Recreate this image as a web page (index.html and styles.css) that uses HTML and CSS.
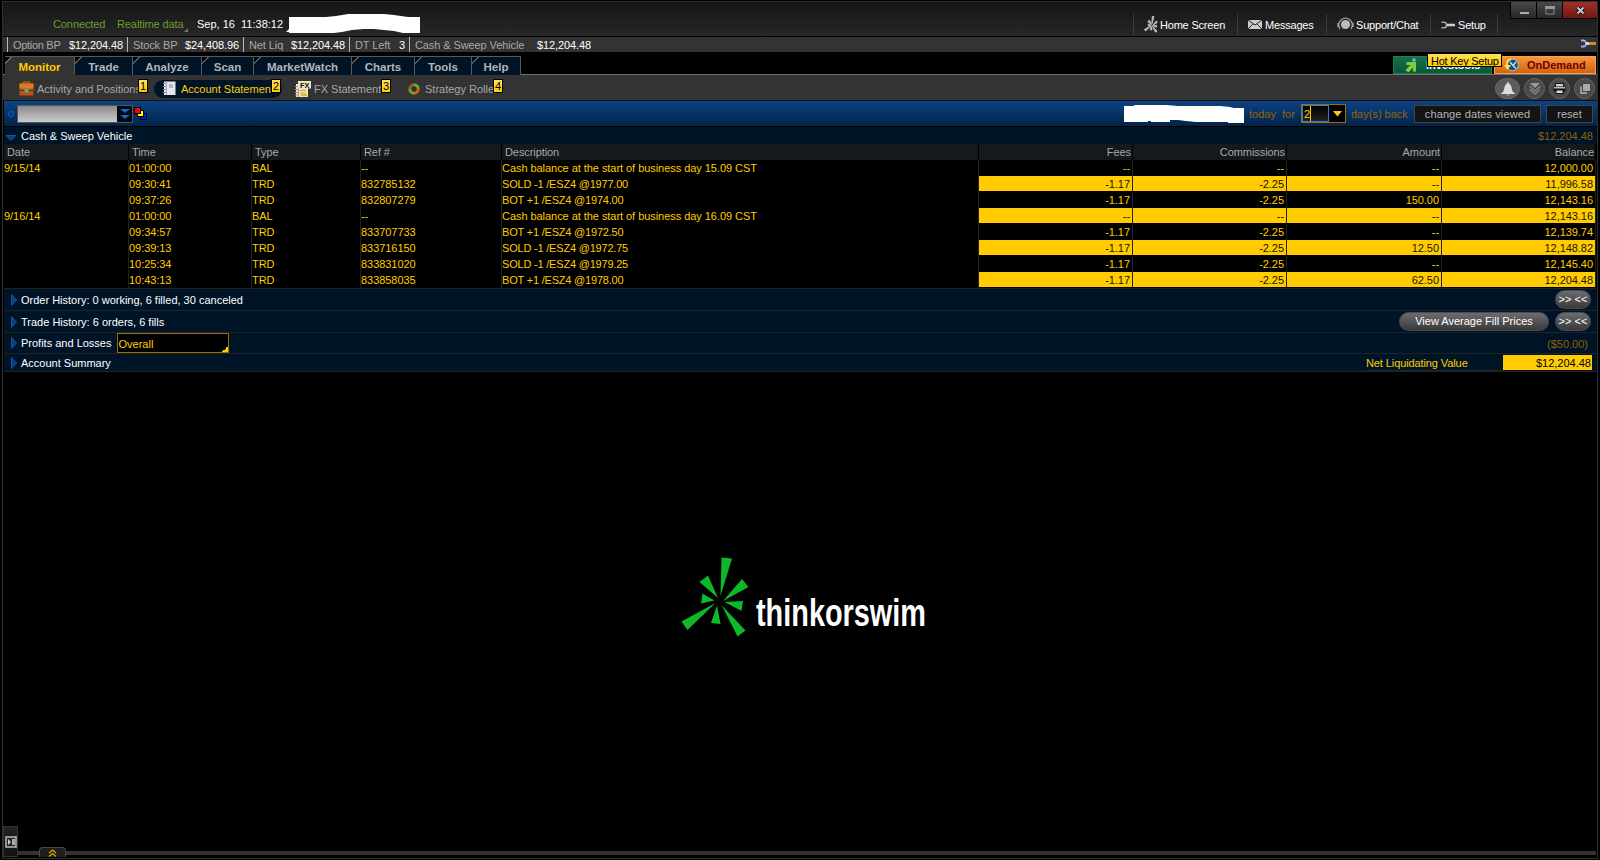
FILE: index.html
```html
<!DOCTYPE html>
<html lang="en">
<head>
    <meta charset="UTF-8">
    <title>thinkorswim</title>
    <link rel="stylesheet" href="styles.css">
</head>
<body>
<div id="window">
    <div id="title">
        <span class="green connected">Connected</span>
        <span class="green realtime">Realtime data</span>
        <svg class="corner" width="4" height="4"><path d="M4 0V4H0Z" fill="#777"/></svg>
        <span class="clock">Sep, 16&nbsp; 11:38:12</span>
        <svg class="mask" width="134" height="20"><path d="M0 18L4 14V18ZM3 3H40L50 2L62 0H98L108 1L122 3H134V19H117L108 17L98 16L88 15H78L66 16L56 18L48 19H3Z" fill="#fff"/></svg>
        <ul id="links">
            <li class="home">
                <svg width="14" height="17" viewBox="0 4 70 84"><path stroke="#bbb" stroke-width="5" fill="#bbb" d="M41 6L50 7L40 42ZM62 28L67 35L43 50ZM19 31L27 25L38 47ZM22 43L34 50L21 52ZM35 52L2 71L8 78ZM37 55L31 72L40 73ZM42 54L65 79L58 85ZM45 51L63 50L61 60Z"/></svg>
                Home Screen
            </li>
            <li class="messages">
                <svg width="14" height="9" viewBox="0 0 14 9"><path d="M0 0H14V9H0Z" fill="#ccc"/><path d="M0 0L7 5L14 0M0 9L5 4M14 9L9 4" stroke="#222" fill="none"/></svg>
                Messages
            </li>
            <li class="support">
                <svg width="17" height="16" viewBox="0 0 17 16"><circle cx="8.500" cy="7.500" r="4.600" fill="#bbb"/><path d="M3 12A6.800 6.800 0 1 1 14 12" fill="none" stroke="#999" stroke-width="1.300"/><path d="M1.200 6V10M15.800 6V10" stroke="#aaa" stroke-width="1.500"/></svg>
                Support/Chat
            </li>
            <li class="setup">
                <svg width="14" height="8" viewBox="0 0 14 8"><path d="M.5 1.200H3.500Q5.500 1.500 5.500 4Q5.500 6.500 3.500 6.800H.5" fill="none" stroke="#aaa" stroke-width="1.600"/><path d="M6 4H14" stroke="#ccc" stroke-width="2.600"/></svg>
                Setup
            </li>
        </ul>
        <div id="controls">
            <div><svg width="10" height="10"><path d="M1 7H10V9H1Z" fill="#aaa"/></svg></div>
            <div><svg width="10" height="10"><path d="M1 2H9V9H1Z" fill="none" stroke="#888"/><path d="M0 1H10V4H0Z" fill="#999"/></svg></div>
            <div class="close"><svg width="9" height="9"><path d="M1.500 1.500L7.500 7.500M7.500 1.500L1.500 7.500" stroke="#000" stroke-width="3.500"/><path d="M1.500 1.500L7.500 7.500M7.500 1.500L1.500 7.500" stroke="#ccc" stroke-width="2"/></svg></div>
        </div>
    </div>

    <div id="status">
        <div class="w1"><label>Option BP</label><b>$12,204.48</b></div>
        <div class="w2"><label>Stock BP</label><b>$24,408.96</b></div>
        <div class="w3"><label>Net Liq</label><b>$12,204.48</b></div>
        <div class="w4"><label>DT Left</label><b>3</b></div>
        <div class="w5"><label>Cash &amp; Sweep Vehicle</label><b>$12,204.48</b></div>
        <svg class="wrench" width="16" height="9" viewBox="0 0 16 9"><path d="M1 1.500H4Q6 2 6 4.500Q6 7 4 7.500H1" fill="none" stroke="#9ab4ee" stroke-width="1.800"/><path d="M6 4.500H9" stroke="#eee" stroke-width="2.500"/><path d="M9 4.500H16" stroke="#d98a28" stroke-width="3"/></svg>
    </div>

    <div id="tabs">
        <div class="tab on t1">Monitor</div>
        <div class="tab t2">Trade</div>
        <div class="tab t3">Analyze</div>
        <div class="tab t4">Scan</div>
        <div class="tab t5">MarketWatch</div>
        <div class="tab t6">Charts</div>
        <div class="tab t7">Tools</div>
        <div class="tab t8">Help</div>
        <div class="investools">
            <svg width="12" height="15" viewBox="0 0 12 15"><path d="M1.500 4H11V13.500H8V9.500L3.500 14.500L.5 12L5.500 7H1.500Z" fill="#7ed03c"/><circle cx="9" cy="2" r="1.800" fill="#6db6ee"/></svg>
            <span>Investools</span>
        </div>
        <div class="ondemand">
            <svg width="15" height="14" viewBox="0 0 15 14"><circle cx="8.500" cy="7" r="5.800" fill="#1c5078" stroke="#9cc4dc"/><path d="M6 4L9 7.500L12 4M9 7.500L12 10.500" stroke="#d6e8f2" fill="none" stroke-width="1.200"/><path d="M7 1.500C4 1.500 3 4 3 7" stroke="#ffe24a" stroke-width="2" fill="none"/><path d="M0 7H7L3.500 12Z" fill="#ffe24a"/></svg>
            <span>OnDemand</span>
        </div>
        <div class="tip">Hot Key Setup</div>
    </div>

    <div id="views">
        <div class="view v1">
            <svg width="15" height="15" viewBox="0 0 15 15"><path d="M4.500 3V1H10.500V3" fill="none" stroke="#b45a10" stroke-width="1.500"/><rect x=".5" y="2.500" width="14" height="12" rx="1" fill="#b85410"/><rect x=".5" y="2.500" width="14" height="5" rx="1" fill="#dc7c20"/><path d="M1 9.500H14" stroke="#6c2e06"/><rect x="5.500" y="8" width="4" height="3.500" fill="#48b3a4"/></svg>
            <span>Activity and Positions</span><i>1</i>
        </div>
        <div class="view v2 on">
            <svg width="13" height="15" viewBox="0 0 13 15"><rect x="1" y=".5" width="11.500" height="13.500" fill="#e6e6f0"/><path d="M3.500 1V14" stroke="#a9a9bb"/><path d="M0 2.500H3M0 5.500H3M0 8.500H3M0 11.500H3" stroke="#888"/><path d="M6 4H10M6 6H10" stroke="#8a8a9a"/></svg>
            <span>Account Statement</span><i>2</i>
        </div>
        <div class="view v3">
            <svg width="16" height="16" viewBox="0 0 16 16"><rect x="1" y="3" width="12" height="13" fill="#eee6bd"/><path d="M3.500 3V16" stroke="#aaa07a"/><path d="M0 5.500H3M0 8.500H3M0 11.500H3M0 14H3" stroke="#999"/><path d="M5 9.500H11M5 12H11" stroke="#b4a878"/><rect x="6" y="13" width="6" height="2" fill="#e8bc20"/><rect x="3.500" y=".5" width="12" height="6.500" fill="#eee6bd" stroke="#eee6bd"/><text x="5" y="6.500" textLength="9.500" lengthAdjust="spacingAndGlyphs" font-size="7.500" font-weight="bold" fill="#111">FX</text></svg>
            <span>FX Statements</span><i>3</i>
        </div>
        <div class="view v4">
            <svg width="12" height="12" viewBox="0 0 12 12"><g fill="none" stroke-width="3"><path d="M1.800 6A4.200 4.200 0 0 1 6 1.800" stroke="#a4552a"/><path d="M6 1.800A4.200 4.200 0 0 1 10.200 6" stroke="#55b929"/><path d="M10.200 6A4.200 4.200 0 0 1 6 10.200" stroke="#dd5b18"/><path d="M6 10.200A4.200 4.200 0 0 1 1.800 6" stroke="#72a526"/></g></svg>
            <span>Strategy Roller</span><i>4</i>
        </div>
        <div id="tools">
            <div class="big"><svg width="16" height="14" viewBox="0 0 16 14"><path d="M8 0C9 0 9 1.500 9 1.500C12 3 11.500 8 13 10L15.500 12H.5L3 10C4.500 8 4 3 7 1.500C7 1.500 7 0 8 0Z" fill="#ddd"/><path d="M6 12.500H10L8 14Z" fill="#aaa"/></svg></div>
            <div><svg width="12" height="12" viewBox="0 0 12 12"><path d="M1 0H11L6 5Z" fill="#999"/><path d="M1 3.500L6 8L11 3.500M1 6.500L6 11L11 6.500" fill="none" stroke="#8a8a8a" stroke-width="1.300"/></svg></div>
            <div><svg width="13" height="11" viewBox="0 0 13 11"><rect x="2.500" y=".5" width="8" height="4" fill="#ccc" stroke="#111"/><rect x=".5" y="3.500" width="12" height="5" rx="1" fill="#111"/><rect x="1" y="4" width="11" height="1.500" fill="#bbb"/><rect x="3" y="7" width="7" height="3.500" fill="#ddd" stroke="#111"/></svg></div>
            <div><svg width="12" height="12" viewBox="0 0 12 12"><rect x="1" y="3.500" width="7" height="7.500" fill="#999"/><rect x="3.500" y=".5" width="8" height="8" fill="#aaa" stroke="#444"/></svg></div>
        </div>
    </div>

    <div id="bar">
        <svg class="ring" width="8" height="8"><circle cx="4" cy="4" r="2.500" fill="none" stroke="#0c56a8" stroke-width="1.300"/></svg>
        <div class="combo"><div><svg width="10" height="10"><path d="M0 0H10L5 4ZM0 6H10L5 10Z" fill="#1769bd"/></svg></div></div>
        <svg class="squares" width="14" height="14"><g stroke="#000"><rect x="6.500" y="6.500" width="6" height="6" fill="#0018ff"/><rect x="3.500" y="3.500" width="6" height="6" fill="#ff0"/><rect x=".5" y=".5" width="6" height="6" fill="red"/></g></svg>
        <svg class="mask2" width="120" height="18"><path d="M0 1H10V0H42L54 1H62L72 1H96L106 2L110 3H120V18H104V17H72L62 16L54 15H46V17H27V16H24V17H0Z" fill="#fff"/></svg>
        <span class="today">today&nbsp; for</span>
        <div class="days"><div>2</div><svg width="9" height="6"><path d="M0 0H9L4.500 5.500Z" fill="#fc0"/></svg></div>
        <span class="back">day(s) back</span>
        <div class="btn change">change dates viewed</div>
        <div class="btn reset">reset</div>
    </div>

    <div class="section cash">
        <svg width="10" height="6"><path d="M0 .5H10L5 5.500Z" fill="#0c3f80" stroke="#15529a"/></svg>
        <span>Cash &amp; Sweep Vehicle</span>
        <em>$12,204.48</em>
    </div>

    <table>
        <colgroup><col class="c1"><col class="c2"><col class="c3"><col class="c4"><col class="c5"><col class="c6"><col class="c6"><col class="c7"><col class="c6"></colgroup>
        <tr><th>Date</th><th>Time</th><th>Type</th><th>Ref #</th><th>Description</th><th class="n">Fees</th><th class="n">Commissions</th><th class="n">Amount</th><th class="n">Balance</th></tr>
        <tr><td>9/15/14</td><td>01:00:00</td><td>BAL</td><td>--</td><td>Cash balance at the start of business day 15.09 CST</td><td class="n">--</td><td class="n">--</td><td class="n">--</td><td class="n">12,000.00</td></tr>
        <tr class="hl"><td></td><td>09:30:41</td><td>TRD</td><td>832785132</td><td class="trd">SOLD -1 /ESZ4 @1977.00</td><td class="n">-1.17</td><td class="n">-2.25</td><td class="n">--</td><td class="n">11,996.58</td></tr>
        <tr><td></td><td>09:37:26</td><td>TRD</td><td>832807279</td><td class="trd">BOT +1 /ESZ4 @1974.00</td><td class="n">-1.17</td><td class="n">-2.25</td><td class="n">150.00</td><td class="n">12,143.16</td></tr>
        <tr class="hl"><td>9/16/14</td><td>01:00:00</td><td>BAL</td><td>--</td><td>Cash balance at the start of business day 16.09 CST</td><td class="n">--</td><td class="n">--</td><td class="n">--</td><td class="n">12,143.16</td></tr>
        <tr><td></td><td>09:34:57</td><td>TRD</td><td>833707733</td><td class="trd">BOT +1 /ESZ4 @1972.50</td><td class="n">-1.17</td><td class="n">-2.25</td><td class="n">--</td><td class="n">12,139.74</td></tr>
        <tr class="hl"><td></td><td>09:39:13</td><td>TRD</td><td>833716150</td><td class="trd">SOLD -1 /ESZ4 @1972.75</td><td class="n">-1.17</td><td class="n">-2.25</td><td class="n">12.50</td><td class="n">12,148.82</td></tr>
        <tr><td></td><td>10:25:34</td><td>TRD</td><td>833831020</td><td class="trd">SOLD -1 /ESZ4 @1979.25</td><td class="n">-1.17</td><td class="n">-2.25</td><td class="n">--</td><td class="n">12,145.40</td></tr>
        <tr class="hl"><td></td><td>10:43:13</td><td>TRD</td><td>833858035</td><td class="trd">BOT +1 /ESZ4 @1978.00</td><td class="n">-1.17</td><td class="n">-2.25</td><td class="n">62.50</td><td class="n">12,204.48</td></tr>
    </table>

    <div class="section order">
        <svg width="6" height="12"><path d="M.5 .5L5.500 6L.5 11.500Z" fill="#0c3f80" stroke="#15529a"/></svg>
        <span>Order History: 0 working, 6 filled, 30 canceled</span>
        <div class="pill last">&gt;&gt; &lt;&lt;</div>
    </div>
    <div class="section trades">
        <svg width="6" height="12"><path d="M.5 .5L5.500 6L.5 11.500Z" fill="#0c3f80" stroke="#15529a"/></svg>
        <span>Trade History: 6 orders, 6 fills</span>
        <div class="pill wide">View Average Fill Prices</div>
        <div class="pill">&gt;&gt; &lt;&lt;</div>
    </div>
    <div class="section profit">
        <svg width="6" height="12"><path d="M.5 .5L5.500 6L.5 11.500Z" fill="#0c3f80" stroke="#15529a"/></svg>
        <span>Profits and Losses</span>
        <div class="overall">Overall</div>
        <em>($50.00)</em>
    </div>
    <div class="section summary">
        <svg width="6" height="12"><path d="M.5 .5L5.500 6L.5 11.500Z" fill="#0c3f80" stroke="#15529a"/></svg>
        <span>Account Summary</span>
        <div class="net">Net Liquidating Value</div>
        <div class="value">$12,204.48</div>
    </div>

    <div id="empty">
        <svg id="logo" width="260" height="90" viewBox="0 0 260 90">
            <g fill="#0db829">
                <path d="M41.500 6.500L52 7.500L40.500 45Z"/>
                <path d="M62 28L68.500 36L43 50Z"/>
                <path d="M19.500 31L28 24.500L38 47Z"/>
                <path d="M22.500 42.500L34.500 49.500L21 52.500Z"/>
                <path d="M35.500 52L1.500 70.500L7.500 79Z"/>
                <path d="M37 54.500L31 72L40.500 73Z"/>
                <path d="M41.500 54L65.500 79.500L57.500 85.500Z"/>
                <path d="M44.500 51L63 50L61.500 60Z"/>
            </g>
            <text x="76" y="75" textLength="170" lengthAdjust="spacingAndGlyphs" font-size="38.500" font-weight="bold" fill="#fff">thinkorswim</text>
        </svg>
    </div>

    <div id="footer">
        <div class="side"><svg width="12" height="12"><rect x="1" y="1" width="10" height="10" fill="#222" stroke="#bbb" stroke-width="1.500"/><path d="M3 3L6 6L3 9Z" fill="#ccc"/><path d="M7 3H10V9H7Z" fill="#aaa"/></svg></div>
        <div class="up"><svg width="9" height="8"><path d="M1 4L4.500 1L8 4M1 7.500L4.500 4.500L8 7.500" fill="none" stroke="#e0aa08" stroke-width="1.300"/></svg></div>
    </div>
</div>
</body>
</html>
```
FILE: styles.css
```css
*{
    margin: 0;
    padding: 0;
    box-sizing: border-box;
}
body{
    width: 1600px;
    height: 860px;
    overflow: hidden;
    background: #000;
    font: 11px/14px "Liberation Sans", Arial, sans-serif;
    color: #fff;
    white-space: nowrap;
}
svg{
    display: block;
    flex: none;
}
#window{
    width: 1596px;
    height: 858px;
    margin: 1px 0 0 2px;
    border: 1px solid #2e2e2e;
    display: flex;
    flex-direction: column;
}
#window > *{
    flex: none;
}

/* title bar */
#title{
    height: 35px;
    display: flex;
    background: linear-gradient(#151515, #272727);
    border-bottom: 1px solid #000;
    padding-left: 50px;
    position: relative;
}
#title > span{
    margin-top: 15px;
}
.green{
    color: #6c9c2e;
}
.connected{
    width: 64px;
    letter-spacing: -.1px;
}
.realtime{
    width: 67px;
    letter-spacing: -.1px;
}
.corner{
    margin-top: 26px;
}
.clock{
    margin-left: 9px;
    width: 88px;
}
.mask{
    margin: 12px 0 0 1px;
}
#links{
    list-style: none;
    display: flex;
    margin: 12px 0 0 auto;
    height: 21px;
    padding-right: 99px;
}
#links li{
    display: flex;
    align-items: center;
    border-left: 1px solid #3c3c3c;
    gap: 3px;
    padding: 0 0 0 10px;
    letter-spacing: -.2px;
}
#links .home{
    width: 104px;
    gap: 2px;
}
#links .messages{
    width: 89px;
}
#links .support{
    width: 104px;
    gap: 2px;
}
#links .setup{
    width: 68px;
    border-right: 1px solid #3c3c3c;
}
#controls{
    position: absolute;
    top: 0;
    right: 0;
    display: flex;
    gap: 1px;
    background: #000;
    padding: 0 0 1px 1px;
}
#controls div{
    width: 25px;
    height: 16px;
    background: linear-gradient(#484848, #282828);
    display: flex;
    align-items: center;
    justify-content: center;
}
#controls .close{
    width: 34px;
    background: linear-gradient(#a03028, #701810);
}

/* account numbers */
#status{
    height: 15px;
    background: #333;
    display: flex;
    padding-left: 4px;
    position: relative;
}
#status div{
    border-left: 1px solid #bbb;
    display: flex;
    justify-content: space-between;
    padding: 0 4px 0 5px;
    line-height: 16px;
    letter-spacing: -.1px;
}
#status label{
    color: #a8a8a8;
}
#status b{
    font-weight: normal;
}
#status .w1{ width: 120px; }
#status .w1 label{ letter-spacing: -.3px; }
#status .w2{ width: 116px; }
#status .w3{ width: 106px; }
#status .w4{ width: 60px; }
#status .w5{ width: 186px; }
.wrench{
    position: absolute;
    right: 1px;
    top: 2px;
}

/* main tabs */
#tabs{
    height: 23px;
    background: #000;
    padding-top: 4px;
    border-bottom: 1px solid #707070;
    display: flex;
    position: relative;
}
.tab{
    height: 19px;
    font: bold 11.5px/21px "Liberation Sans", Arial, sans-serif;
    text-align: center;
    color: #b4b4b4;
    background: linear-gradient(135deg, #000 4px, #5a5a5a 4px, #5a5a5a 5px, #001428 5px);
    border-top: 1px solid #5a5a5a;
    border-right: 1px solid #5a5a5a;
}
.tab.on{
    height: 20px;
    color: #fc0;
    background: linear-gradient(135deg, #000 4px, #707070 4px, #707070 5px, #333 5px);
    margin-left: 2px;
}
.t1{ width: 70px; }
.t2{ width: 58px; }
.t3{ width: 69px; }
.t4{ width: 52px; }
.t5{ width: 98px; }
.t6{ width: 63px; }
.t7{ width: 57px; }
.t8{ width: 49px; }
.investools, .ondemand{
    height: 18px;
    display: flex;
    align-items: center;
    font-weight: bold;
}
.investools{
    width: 99px;
    margin-left: auto;
    padding-left: 11px;
    gap: 9px;
    background: linear-gradient(#177048, #0a5638);
    border: 1px solid #1c8054;
}
.ondemand{
    width: 102px;
    margin: 0 1px 0 2px;
    padding-left: 9px;
    gap: 8px;
    color: #700000;
    background: linear-gradient(#f79440, #d06410);
    border: 1px solid #ffa050;
}
.tip{
    position: absolute;
    top: 1px;
    right: 95px;
    width: 75px;
    height: 14px;
    line-height: 14px;
    padding-left: 3px;
    color: #000;
    background: linear-gradient(#ffe05a, #fc0);
    border: 1px solid #000;
    letter-spacing: -.25px;
}

/* sub tabs */
#views{
    height: 26px;
    background: #333;
    border-bottom: 1px solid #111;
    padding-top: 2px;
    display: flex;
    align-items: center;
    position: relative;
}
.view{
    height: 18px;
    display: flex;
    align-items: center;
    color: #a8a8a8;
    position: relative;
}
.view span{
    overflow: hidden;
    padding-top: 1px;
}
.view i{
    position: absolute;
    top: -1px;
    width: 10px;
    height: 14px;
    line-height: 13px;
    text-align: center;
    font-style: normal;
    color: #000;
    background: linear-gradient(#ffe060, #fc0);
    border: 1px solid #000;
}
.v1{
    margin-left: 16px;
    width: 135px;
    gap: 3px;
}
.v1 span{ width: 101px; }
.v1 i{ left: 119px; }
.v2{
    width: 128px;
    padding-left: 9px;
    gap: 5px;
    color: #fc0;
    background: #001428;
    border-radius: 9px;
}
.v2 span{ width: 91px; }
.v2 i{ left: 117px; }
.v3{
    margin-left: 13px;
    width: 113px;
    gap: 3px;
}
.v3 span{ width: 67px; }
.v3 i{ left: 86px; }
.v4{ gap: 5px; }
.v4 span{ width: 69px; }
.v4 i{ left: 85px; }
#tools{
    margin: 0 2px 0 auto;
    display: flex;
    align-items: center;
    gap: 4px;
}
#tools div{
    width: 21px;
    height: 21px;
    border-radius: 50%;
    background: #484a4c;
    border: 1px solid #62686e;
    display: flex;
    align-items: center;
    justify-content: center;
}
#tools .big{
    width: 25px;
    background: #5a5c5e;
}

/* blue bar */
#bar{
    height: 26px;
    margin-left: 1px;
    background: linear-gradient(#0b4284, #032448);
    border-bottom: 1px solid #000;
    display: flex;
    align-items: center;
    color: #936308;
}
.ring{
    margin-left: 3px;
}
.combo{
    margin-left: 2px;
    width: 116px;
    height: 18px;
    border: 1px solid #555;
    background: linear-gradient(#8a8a8a, #ccc);
    display: flex;
    justify-content: flex-end;
}
.combo div{
    width: 15px;
    background: #000814;
    display: flex;
    align-items: center;
    justify-content: center;
}
.squares{
    margin-left: 1px;
}
.mask2{
    margin-left: auto;
}
.today{
    margin-left: 5px;
    width: 52px;
}
.days{
    width: 45px;
    height: 19px;
    border: 1px solid #a06c08;
    background: #000;
    display: flex;
    align-items: center;
    gap: 4px;
}
.days div{
    width: 27px;
    height: 17px;
    line-height: 16px;
    padding-left: 1px;
    border: 1px solid #3c78d8;
    color: #fc0;
    background: linear-gradient(90deg, transparent 7px, #fc0 7px, #fc0 8px, transparent 8px), linear-gradient(#000, #222);
}
.back{
    margin-left: 5px;
    width: 63px;
}
.btn{
    height: 18px;
    line-height: 16px;
    text-align: center;
    color: #b4b4b4;
    background: #141414;
    border: 1px solid #3c4650;
}
.change{
    width: 127px;
    letter-spacing: .1px;
}
.reset{
    width: 47px;
    margin: 0 4px 0 5px;
}

/* sections */
.section{
    margin-left: 1px;
    background: #001428;
    display: flex;
    align-items: center;
    border-bottom: 1px solid #222;
    padding: 0 5px 0 7px;
}
.section > svg{
    margin-right: 4px;
}
.section em{
    margin-left: auto;
    font-style: normal;
    color: #8f6008;
}
.cash{
    height: 17px;
    border: 0;
    padding: 1px 4px 0 2px;
}
.cash > svg{
    margin: 3px 5px 0 0;
}
.order, .trades{
    height: 22px;
}
.profit{
    height: 21px;
}
.profit em{
    margin-right: 4px;
    padding-top: 1px;
}
.summary{
    height: 18px;
}
.pill{
    width: 36px;
    height: 19px;
    line-height: 17px;
    border-radius: 10px;
    text-align: center;
    background: linear-gradient(#6c6c6c, #3a3a3a);
    border: 1px solid #454d55;
    margin-right: 1px;
}
.pill.last{
    margin-left: auto;
}
.pill.wide{
    width: 150px;
    margin-left: auto;
    margin-right: 6px;
}
.overall{
    margin-left: 5px;
    width: 112px;
    height: 20px;
    line-height: 20px;
    padding-left: 1px;
    color: #fc0;
    border: 1px solid #a06c08;
    background: linear-gradient(135deg, transparent 50%, #fc0 50%) no-repeat right bottom/6px 6px #000;
}
.net{
    margin-left: auto;
    width: 137px;
    height: 16px;
    line-height: 17px;
    letter-spacing: -.1px;
    color: #fc0;
    border-bottom: 1px solid #222;
}
.value{
    width: 89px;
    height: 15px;
    line-height: 16px;
    margin-bottom: 1px;
    padding-right: 1px;
    text-align: right;
    color: #001;
    background: #fc0;
}

/* statement */
table{
    width: 1592px;
    margin-left: 1px;
    border-collapse: collapse;
    table-layout: fixed;
    border-bottom: 1px solid #222;
}
.c1{ width: 125px; }
.c2{ width: 123px; }
.c3{ width: 109px; }
.c4{ width: 141px; }
.c5{ width: 477px; }
.c6{ width: 154px; }
.c7{ width: 155px; }
th{
    height: 16px;
    line-height: 16px;
    padding: 0 2px 0 3px;
    font-weight: normal;
    text-align: left;
    color: #a8a8a8;
    background: linear-gradient(90deg, transparent calc(100% - 1px), #000 0) #14191c;
    letter-spacing: -.08px;
}
td{
    height: 16px;
    line-height: 16px;
    padding: 0 3px 0 0;
    color: #fc0;
    background: linear-gradient(#222, #222) no-repeat right/1px 100%;
    letter-spacing: -.05px;
}
.trd{
    letter-spacing: -.2px;
}
.n{
    text-align: right;
}
.hl .n{
    color: #1a1400;
    background: linear-gradient(#222, #222) no-repeat right/1px 100%, linear-gradient(#fc0, #fc0) no-repeat 0 0/100% 15px;
}

/* empty workspace with logo */
#empty{
    height: 478px;
    background: #000;
    padding: 179px 0 0 677px;
}
#empty text{
    font-family: "Liberation Sans", Arial, sans-serif;
}

/* bottom strip */
#footer{
    position: absolute;
    left: 3px;
    top: 826px;
    width: 1593px;
    height: 31px;
    display: flex;
    align-items: flex-end;
    background: linear-gradient(#333, #333) no-repeat 15px 25px/100% 4px;
}
.side{
    width: 15px;
    height: 31px;
    border: 1px solid #333;
    background: linear-gradient(#222, #111);
    display: flex;
    align-items: center;
    justify-content: center;
}
.up{
    margin-left: 21px;
    width: 27px;
    height: 10px;
    border: 1px solid #4a4a4a;
    border-bottom: 0;
    border-radius: 4px 4px 0 0;
    background: #1e1e1e;
    display: flex;
    align-items: center;
    justify-content: center;
}
```
